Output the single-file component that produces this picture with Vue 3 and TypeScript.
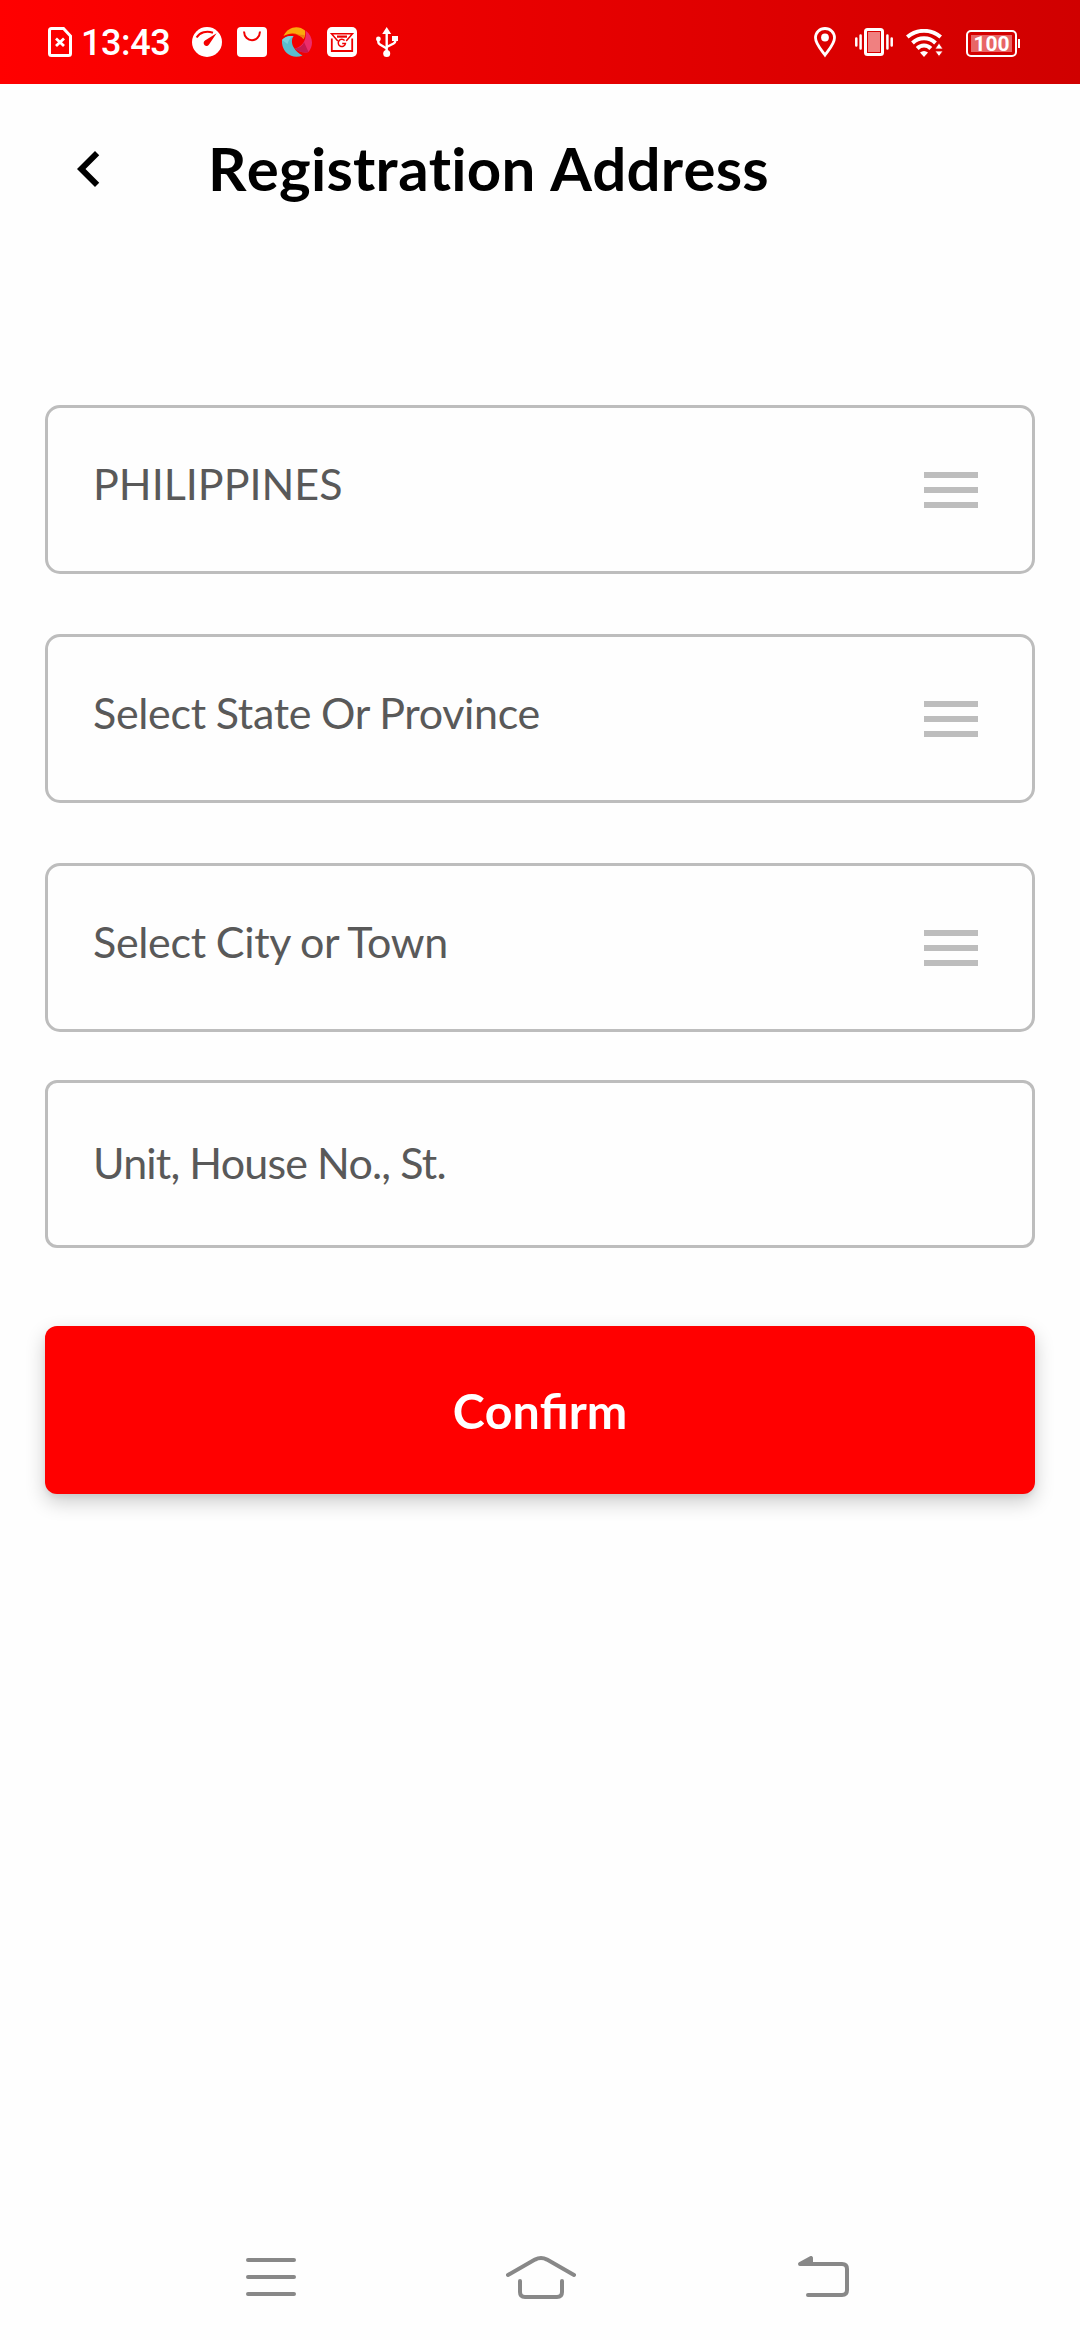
<script setup lang="ts">
interface SelectField {
  id: string
  label: string
}

const selects: SelectField[] = [
  { id: 'country', label: 'PHILIPPINES' },
  { id: 'province', label: 'Select State Or Province' },
  { id: 'city', label: 'Select City or Town' },
]
</script>

<template>
  <div class="screen">
    <header class="status">
      <div class="status-left">
        <svg class="sim" width="24" height="30" viewBox="0 0 24 30" fill="none" stroke="#fff">
          <path d="M3.5 1.5H15.5L22.5 9V26.5Q22.5 28.5 20.5 28.5H3.5Q1.5 28.5 1.5 26.5V3.5Q1.5 1.5 3.5 1.5Z" stroke-width="3" />
          <path d="M8 11.5L16 19M16 11.5L8 19" stroke-width="2.8" />
        </svg>
        <span class="clock">13:43</span>
        <div class="notifications">
          <svg width="30" height="30" viewBox="0 0 30 30">
            <circle cx="15" cy="15" r="15" fill="#fff" />
            <path d="M4.6 10.5C8 5.2 14.5 3.6 21 5.8" fill="none" stroke="#f50000" stroke-width="2" />
            <path d="M24.6 6.2L17.2 17.2A2.9 2.9 0 1 1 13 13.6Z" fill="#f50000" />
          </svg>
          <svg width="30" height="30" viewBox="0 0 30 30">
            <rect width="30" height="30" rx="4" fill="#fff" />
            <path d="M7 4.5C7.5 16 22.5 16 23 4.5" fill="none" stroke="#f20000" stroke-width="2" />
          </svg>
          <svg width="30" height="30" viewBox="0 0 30 30">
            <path d="M1.5 9C6 -1 17-2 23 3.5C23.5 7 23 10 21.5 12C17 6 9 4.5 1.5 9Z" fill="#fba90d" />
            <path d="M11 7.2C16 7.5 19.5 9 21.5 12L22.6 8Z" fill="#ee7a10" />
            <path d="M23.5 3.5C31 9 32 18 26.5 25C22.5 26.5 17 25 13 21.5C21 19.5 25 12 23.5 3.5Z" fill="#ec2c6b" />
            <path d="M22 15C21 18.5 17.5 21 13 21.5C17 25 22.5 26.5 26.5 25Z" fill="#c71950" />
            <path d="M0 13C3 9.5 7 8.5 11.5 9.2C8 14 10 23 20.5 28.5C10 33-1 25 0 13Z" fill="#5bbdcf" />
            <path d="M0 13C3 9.5 7 8.5 11.5 9.2C9 10 6 14 5.5 17Z" fill="#79d1df" />
          </svg>
          <svg width="30" height="30" viewBox="0 0 30 30">
            <rect width="30" height="30" rx="5" fill="#fff" />
            <g fill="none" stroke="#ee0000">
              <path d="M4.8 11.5V24H25.2V11.5" stroke-width="1.8" />
              <path d="M10.8 14L4.5 6.7H25.5L19.2 14" stroke-width="1.5" />
              <path d="M10 9.6H20" stroke-width="2.2" />
              <path d="M17.6 13.6A3.6 3.6 0 1 0 18.4 16.6H15.2" stroke-width="1.5" />
            </g>
          </svg>
          <svg class="usb" width="22" height="30" viewBox="0 0 22 30">
            <g fill="none" stroke="#fff" stroke-width="2.4">
              <path d="M10.7 5V26" />
              <path d="M2.3 12V15Q2.3 16.5 4 17.5L10.7 21.5" />
              <path d="M19.3 12V14Q19.3 15.5 17.6 16.5L10.7 20" />
            </g>
            <path d="M10.7 0L15.2 7H6.2ZM16 9H22V14H16Z" fill="#fff" />
            <circle cx="10.7" cy="26.5" r="3.5" fill="#fff" />
            <circle cx="2.4" cy="12" r="2.4" fill="#fff" />
          </svg>
        </div>
      </div>
      <div class="status-right">
        <svg width="22" height="31" viewBox="0 0 22 31">
          <path d="M11 1.5C5.5 1.5 1.5 5.5 1.5 10.8C1.5 17 7.5 23 11 28C14.5 23 20.5 17 20.5 10.8C20.5 5.5 16.5 1.5 11 1.5Z" fill="none" stroke="#fff" stroke-width="2.8" />
          <circle cx="11" cy="10.5" r="3.9" fill="#fff" />
        </svg>
        <svg class="vibrate" width="38" height="28" viewBox="0 0 38 28">
          <rect x="10.5" y="1.5" width="17" height="25" rx="2" fill="none" stroke="#fff" stroke-width="3" />
          <rect x="13" y="4" width="12" height="20" fill="#f08080" />
          <path d="M1.3 10.5V17.5M5.6 7.5V20.5M36.7 10.5V17.5M32.4 7.5V20.5" stroke="#fff" stroke-width="2.5" stroke-linecap="round" />
        </svg>
        <svg class="wifi" width="37" height="28" viewBox="0 0 37 28">
          <g fill="none" stroke="#fff" stroke-width="4">
            <path d="M1.3 8C11 -0.2 25 -0.2 34.7 8" />
            <path d="M6.5 14C13 7.8 23 7.8 29.5 14" />
            <path d="M11.2 19.5C15 15.5 21 15.5 24.8 19.5" />
          </g>
          <path d="M14 23.5Q18 20.5 22 23.5L18 28Z" fill="#fff" />
          <path d="M33 14L37 20H29ZM33 27.5L37 22H29Z" fill="#fff" stroke="#d80000" stroke-width="0.8" />
        </svg>
        <div class="battery">
          <div class="battery-body"><span class="battery-level">100</span></div>
          <span class="battery-tip"></span>
        </div>
      </div>
    </header>

    <div class="title-bar">
      <svg width="72" height="72" viewBox="0 0 24 24">
        <path d="M15.41 7.41L14 6l-6 6 6 6 1.41-1.41L10.83 12z" fill="#000" />
      </svg>
      <h1>Registration Address</h1>
    </div>

    <main class="form">
      <div class="selects">
        <div v-for="field in selects" :key="field.id" class="field">
          <span class="label">{{ field.label }}</span>
          <span class="bars"><i></i><i></i><i></i></span>
        </div>
      </div>
      <div class="field street"><span class="label">Unit, House No., St.</span></div>
      <button class="confirm" type="button">Confirm</button>
    </main>

    <nav class="system-nav">
      <svg width="50" height="38" viewBox="0 0 50 38">
        <path d="M2 2H48M2 19H48M2 36H48" />
      </svg>
      <svg width="70" height="43" viewBox="0 0 70 43">
        <path d="M2 19L29 3.6Q35 .5 41 3.6L68 19M14 25V36Q14 41 19 41H51Q56 41 56 36V25" />
      </svg>
      <svg width="51" height="41" viewBox="0 0 51 41">
        <path d="M3 8H44Q49 8 49 13V34Q49 39 44 39H10" />
        <path d="M2 8L13 2V8Z" fill="#888" />
      </svg>
    </nav>
  </div>
</template>

<style>
body {
  margin: 0;
  background: #fefefe;
}
</style>

<style scoped>
.screen {
  display: flex;
  flex-direction: column;
  width: 1080px;
  height: 2340px;
  background: #fefefe;
  font-family: Lato, sans-serif;
}

svg {
  display: block;
  flex: none;
}

.status {
  display: flex;
  justify-content: space-between;
  box-sizing: border-box;
  height: 84px;
  padding: 0 60px 0 48px;
  background: linear-gradient(90deg, #ff0000, #d00000);
  color: #fff;
}

.status-left,
.status-right,
.notifications {
  display: flex;
  align-items: center;
}

.clock {
  width: 109px;
  height: 42px;
  margin-left: 9px;
  padding-top: 2px;
  font: 500 36px/42px Roboto, sans-serif;
  letter-spacing: -0.4px;
}

.notifications {
  gap: 15px;
  margin-left: 2px;
}

.usb {
  margin-left: 4px;
}

.vibrate {
  margin-left: 19px;
}

.wifi {
  margin: 2px 0 0 13px;
}

.battery {
  display: flex;
  align-items: center;
  margin: 3px 0 0 23px;
}

.battery-body {
  box-sizing: border-box;
  width: 51px;
  height: 27px;
  padding: 3px;
  border: 2px solid #fff;
  border-radius: 5px;
}

.battery-level {
  display: block;
  height: 17px;
  background: #e86666;
  font: 700 21px/18px Roboto, sans-serif;
  text-align: center;
}

.battery-tip {
  width: 2px;
  height: 9px;
  margin-left: 1px;
  background: #fff;
}

.title-bar {
  display: flex;
  align-items: center;
  height: 72px;
  margin-top: 49px;
  padding-left: 53px;
}

h1 {
  margin: 0 0 2px 83px;
  font-size: 60px;
  line-height: 72px;
  font-weight: 700;
  font-kerning: none;
  font-variant-ligatures: none;
  letter-spacing: 0.22px;
  color: #000;
}

.form {
  display: flex;
  flex-direction: column;
  flex: 1;
  padding: 200px 45px 0;
}

.selects {
  display: flex;
  flex-direction: column;
  gap: 60px;
}

.field {
  display: flex;
  align-items: center;
  justify-content: space-between;
  box-sizing: border-box;
  height: 169px;
  padding: 0 54px 0 45px;
  border: 3px solid #bdbdbd;
  border-radius: 15px;
}

.label {
  padding-bottom: 12px;
  font-size: 43px;
  line-height: 52px;
  color: #595959;
}

.field + .field .label {
  letter-spacing: -0.32px;
  word-spacing: -0.7px;
}

.bars {
  display: flex;
  flex-direction: column;
  gap: 9px;
  width: 54px;
}

.bars i {
  height: 6px;
  background: #bdbdbd;
}

.street {
  height: 168px;
  margin-top: 48px;
  border-radius: 12px;
}

.street .label {
  padding-bottom: 2px;
  letter-spacing: -0.82px;
  word-spacing: -0.2px;
}

.confirm {
  height: 168px;
  margin-top: 78px;
  padding: 0;
  border: 0;
  border-radius: 12px;
  background: #ff0000;
  box-shadow: 0 8px 20px rgba(0, 0, 0, 0.2), 0 3px 5px rgba(0, 0, 0, 0.06);
  color: #fff;
  font: 700 48.4px/58px Lato, sans-serif;
  font-kerning: none;
}

.system-nav {
  display: flex;
  align-items: center;
  height: 126px;
  padding-left: 246px;
}

.system-nav svg {
  fill: none;
  stroke: #888;
  stroke-width: 4;
  stroke-linecap: round;
  stroke-linejoin: round;
}

.system-nav svg:nth-child(2) {
  margin-left: 210px;
}

.system-nav svg:nth-child(3) {
  margin: 0 0 2px 222px;
}
</style>
